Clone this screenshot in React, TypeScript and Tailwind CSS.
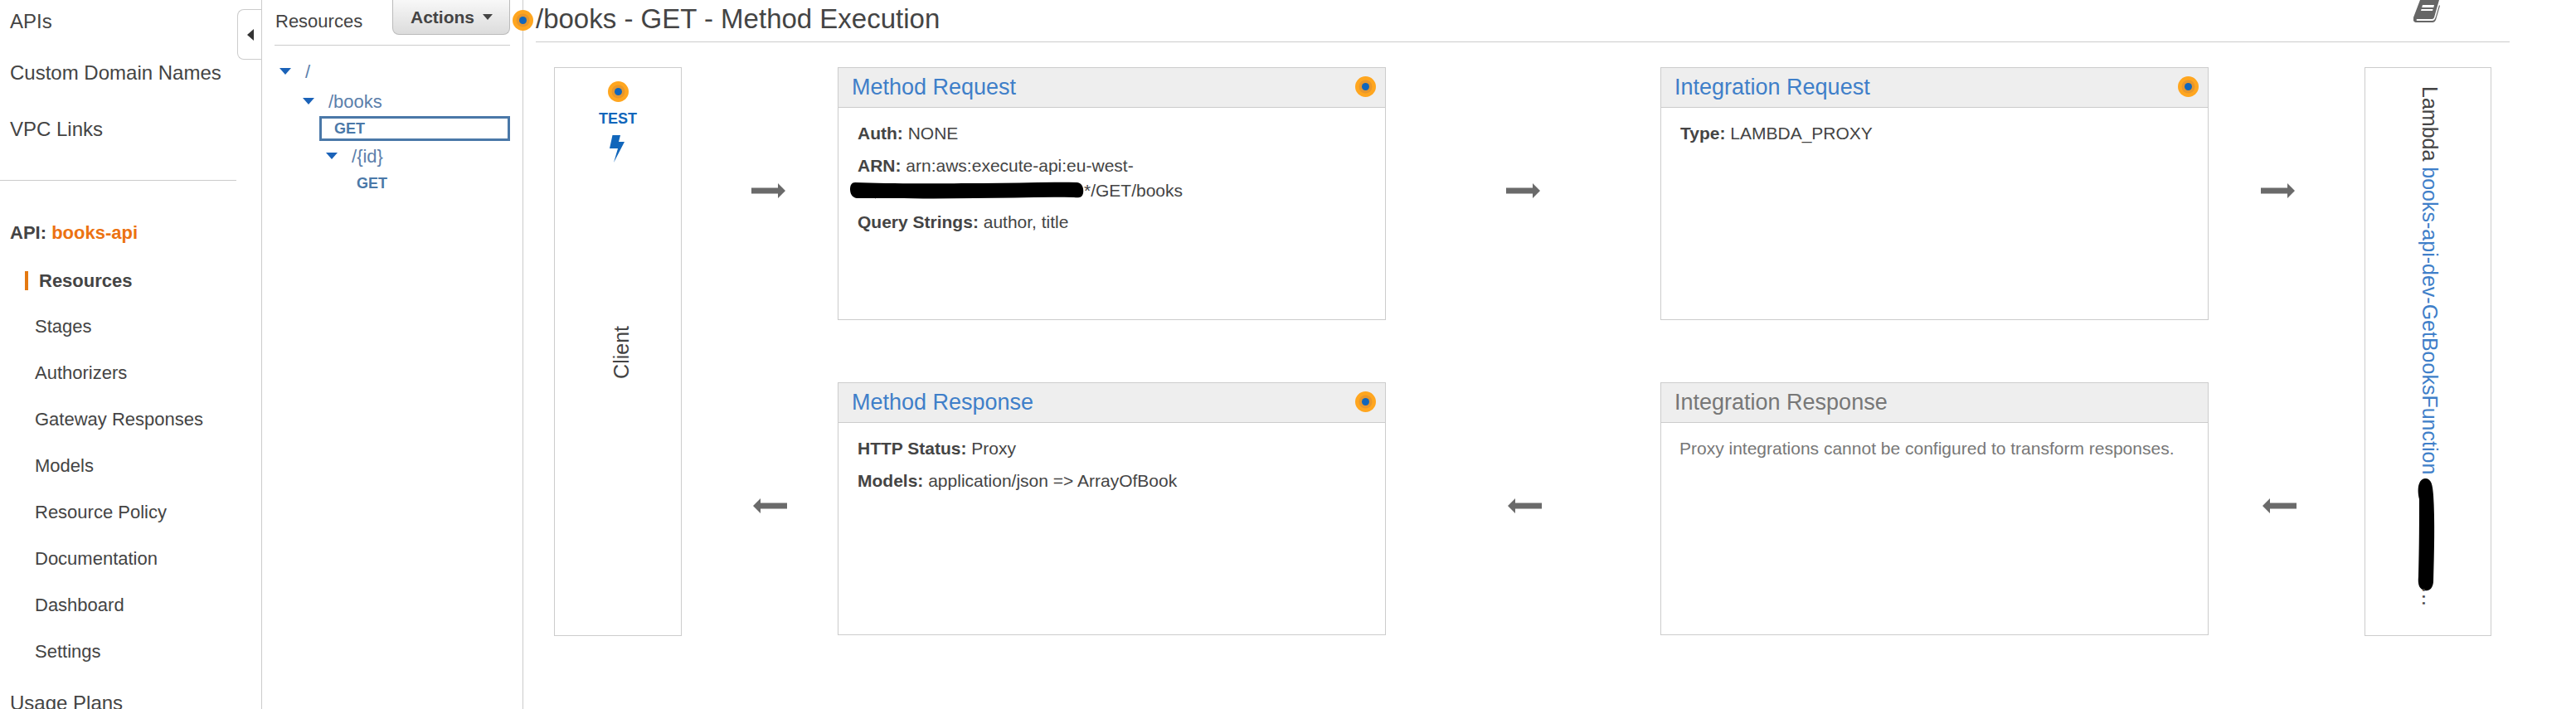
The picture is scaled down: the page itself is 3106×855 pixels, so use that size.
import { ReactNode } from "react";

const FONT = "font-['Liberation_Sans',Arial,sans-serif]";

const OrangeDot = ({ className = "" }: { className?: string }) => (
  <svg width="25" height="25" viewBox="0 0 25 25" className={className}>
    <circle cx="12.5" cy="12.5" r="12.5" fill="#ffa61f" />
    <circle cx="12.5" cy="12.5" r="8" fill="#e8972c" />
    <circle cx="12.5" cy="12.5" r="4.5" fill="#1166bb" />
  </svg>
);

const Caret = ({ className = "" }: { className?: string }) => (
  <svg width="14" height="8" viewBox="0 0 14 8" className={className}>
    <path d="M0 0H14L7 8Z" fill="#1a62b8" />
  </svg>
);

const Arrow = ({ left = false }: { left?: boolean }) => (
  <svg width="41" height="18" viewBox="0 0 41 18" className={left ? "rotate-180" : ""}>
    <path d="M0 5.5H32V0L41 9L32 18V12.5H0Z" fill="#6a6a6a" />
  </svg>
);

const SubItem = ({ children }: { children: ReactNode }) => (
  <div className="h-14 flex items-center pl-[42px] text-[22px] text-[#444]">{children}</div>
);

const Sidebar = () => (
  <aside className="w-[316px] shrink-0 border-r border-[#ccc] relative h-[855px] overflow-hidden">
    <div className="w-[285px]">
      <div className="pl-3 text-[24px] text-[#444]">
        <div className="h-[52px] flex items-center">APIs</div>
        <div className="h-[72px] flex items-center">Custom Domain Names</div>
        <div className="h-[64px] flex items-center">VPC Links</div>
      </div>
      <div className="mt-[29px] border-t border-[#ccc]" />
      <div className="mt-[47px] h-[30px] pl-3 flex items-center text-[22px] font-bold text-[#444] whitespace-pre">
        API: <span className="text-[#ec7211]">books-api</span>
      </div>
      <div className="mt-[32px] h-[23px] ml-[30px] border-l-4 border-[#e47911] pl-[13px] flex items-center text-[22px] font-bold text-[#444]">
        Resources
      </div>
      <div className="mt-[15px]">
        {["Stages", "Authorizers", "Gateway Responses", "Models", "Resource Policy", "Documentation", "Dashboard", "Settings"].map((item) => (
          <SubItem key={item}>{item}</SubItem>
        ))}
      </div>
      <div className="pl-3 mt-[17px] text-[24px] text-[#444] whitespace-nowrap">Usage Plans</div>
    </div>
    <div className="absolute left-[286px] top-[11px] w-[31px] h-[61px] bg-white border border-r-0 border-[#ccc] rounded-l-lg flex items-center justify-center">
      <svg width="8" height="14" viewBox="0 0 8 14"><path d="M8 0V14L0 7Z" fill="#333" /></svg>
    </div>
  </aside>
);

const ResourceTree = () => (
  <section className="w-[315px] shrink-0 border-r border-[#ccc] h-[855px] pl-[15px] pr-[15px]">
    <div className="h-[55px] border-b border-[#ccc] flex justify-between">
      <div className="text-[22px] text-[#444] mt-[9px] ml-px">Resources</div>
      <div className="w-[142px] h-[42px] rounded-b-lg border border-t-0 border-[#bbb] bg-gradient-to-b from-[#f8f8f8] to-[#dcdcdc] flex items-center pl-[21px] gap-[10px] text-[21px] font-bold text-[#444]">
        Actions
        <svg width="12" height="7" viewBox="0 0 12 7"><path d="M0 0H12L6 7Z" fill="#444" /></svg>
      </div>
    </div>
    <div className="text-[#5b80ab] text-[22px]">
      <div className="h-[36px] mt-[13px] flex items-center pl-[6px]">
        <Caret /><span className="ml-[17px]">/</span>
      </div>
      <div className="h-[36px] flex items-center pl-[34px]">
        <Caret /><span className="ml-[17px]">/books</span>
      </div>
      <div className="h-[30px] ml-[54px] border-[3px] border-[#4a78a8] flex items-center pl-[15px] text-[18px] font-bold text-[#4a78a8]">GET</div>
      <div className="h-[36px] flex items-center pl-[62px]">
        <Caret /><span className="ml-[17px]">/{"{id}"}</span>
      </div>
      <div className="h-[30px] flex items-center pl-[99px] text-[18px] font-bold text-[#4a78a8]">GET</div>
    </div>
  </section>
);

const Redaction = () => (
  <svg width="282" height="21" viewBox="0 0 282 21" className="-ml-[9px] shrink-0">
    <path d="M6 1C50 3 120 2 160 2C200 2 240 0 274 1C280 2 282 8 281 14C280 19 276 20 270 19C230 18 190 20 150 20C100 21 50 20 8 20C2 19 0 14 0 9C0 4 2 1 6 1Z" fill="#000" />
  </svg>
);

const Card = ({ title, muted, dot = true, children }: { title: string; muted?: boolean; dot?: boolean; children: ReactNode }) => (
  <div className="w-[661px] h-[305px] border border-[#ccc]">
    <div className="h-[48px] bg-[#eee] border-b border-[#ccc] flex items-center justify-between pl-4 pr-[11px]">
      <span className={`text-[27px] ${muted ? "text-[#777]" : "text-[#3f7fc9]"}`}>{title}</span>
      {dot && <OrangeDot className="-mt-[2px]" />}
    </div>
    <div className="pt-[16px] px-[23px] text-[21px] leading-[30px] text-[#444] flex flex-col gap-[8.5px]">{children}</div>
  </div>
);

const Field = ({ label, children }: { label: string; children?: ReactNode }) => (
  <div className="whitespace-nowrap"><b>{label}:</b> {children}</div>
);

const ClientColumn = () => (
  <div className="w-[154px] h-[686px] border border-[#ccc] flex flex-col items-center relative">
    <OrangeDot className="mt-[16px]" />
    <div className="mt-[8px] h-[24px] leading-[24px] text-[18px] font-bold text-[#1166bb]">TEST</div>
    <svg width="18" height="33" viewBox="0 0 18 33" className="mt-[8px] -ml-[3px]">
      <path d="M3.5 0H13L11 8H18L5 33L10 16H0Z" fill="#1166bb" />
    </svg>
    <div className="absolute left-[62px] top-[311px] [writing-mode:vertical-rl] rotate-180 text-[25px] text-[#444]">Client</div>
  </div>
);

const LambdaColumn = () => (
  <div className="w-[153px] h-[686px] border border-[#ccc] relative overflow-hidden">
    <div className="absolute left-[58px] top-[22px] [writing-mode:vertical-rl] text-[25px] text-[#444] whitespace-nowrap">
      Lambda <span className="text-[#3f7fc9]">books-api-dev-GetBooksFunction</span>
    </div>
    <svg width="24" height="138" viewBox="0 0 24 138" className="absolute left-[62px] top-[495px]">
      <path d="M10 0C18 0 19 8 20 20C22 50 21 90 20 125C19 133 15 136 10 135C3 134 1 128 2 118C3 80 3 50 3 25C0 12 2 1 10 0Z" fill="#000" />
    </svg>
    <div className="absolute left-[58px] top-[626px] [writing-mode:vertical-rl] text-[25px] tracking-[1px] text-[#444]">...</div>
  </div>
);

const Execution = () => (
  <main className="flex-1 pl-[15px] pr-[80px]">
    <div className="h-[51px] border-b border-[#ccc] flex items-start justify-between relative">
      <h1 className="text-[33px] text-[#444] mt-[4px] leading-[38px] font-normal">/books - GET - Method Execution</h1>
      <svg width="32" height="27" viewBox="0 0 32 27" className="mr-[84px]">
        <path d="M8 0H31L25 21C24 23 23 23 21 23H5C3 23 3 25 5 25H22C25 25 26 23 27 20L31 6L32 7L27 24C26 26 25 27 23 27H4C0 27 -1 24 0 21Z" fill="#666" />
        <path d="M11 6H25L24.3 9H10.2ZM9.6 11H23.6L23 13H9Z" fill="#fff" />
      </svg>
      <OrangeDot className="absolute -left-[28px] top-[12px]" />
    </div>
    <div className="mt-[30px] ml-[22px] flex items-start">
      <ClientColumn />
      <div className="w-[188px] h-[686px] flex flex-col">
        <div className="h-[298px] pl-[84px] pt-[140px]"><Arrow /></div>
        <div className="pl-[86px] pt-[222px]"><Arrow left /></div>
      </div>
      <div className="flex flex-col gap-[75px]">
        <Card title="Method Request">
          <Field label="Auth">NONE</Field>
          <div>
            <Field label="ARN">arn:aws:execute-api:eu-west-</Field>
            <div className="flex items-center h-[30px] whitespace-nowrap"><Redaction />*/GET/books</div>
          </div>
          <Field label="Query Strings">author, title</Field>
        </Card>
        <Card title="Method Response">
          <Field label="HTTP Status">Proxy</Field>
          <Field label="Models">application/json =&gt; ArrayOfBook</Field>
        </Card>
      </div>
      <div className="w-[331px] shrink-0 h-[686px] flex flex-col">
        <div className="h-[298px] pl-[145px] pt-[140px]"><Arrow /></div>
        <div className="pl-[147px] pt-[222px]"><Arrow left /></div>
      </div>
      <div className="flex flex-col gap-[75px]">
        <Card title="Integration Request">
          <Field label="Type">LAMBDA_PROXY</Field>
        </Card>
        <Card title="Integration Response" muted dot={false}>
          <div className="text-[#777] -ml-px">Proxy integrations cannot be configured to transform responses.</div>
        </Card>
      </div>
      <div className="w-[188px] h-[686px] flex flex-col shrink-0">
        <div className="h-[298px] pl-[63px] pt-[140px]"><Arrow /></div>
        <div className="pl-[65px] pt-[222px]"><Arrow left /></div>
      </div>
      <LambdaColumn />
    </div>
  </main>
);

export default function App() {
  return (
    <div className={`${FONT} flex w-[3106px] h-[855px] overflow-hidden bg-white`}>
      <Sidebar />
      <ResourceTree />
      <Execution />
    </div>
  );
}
